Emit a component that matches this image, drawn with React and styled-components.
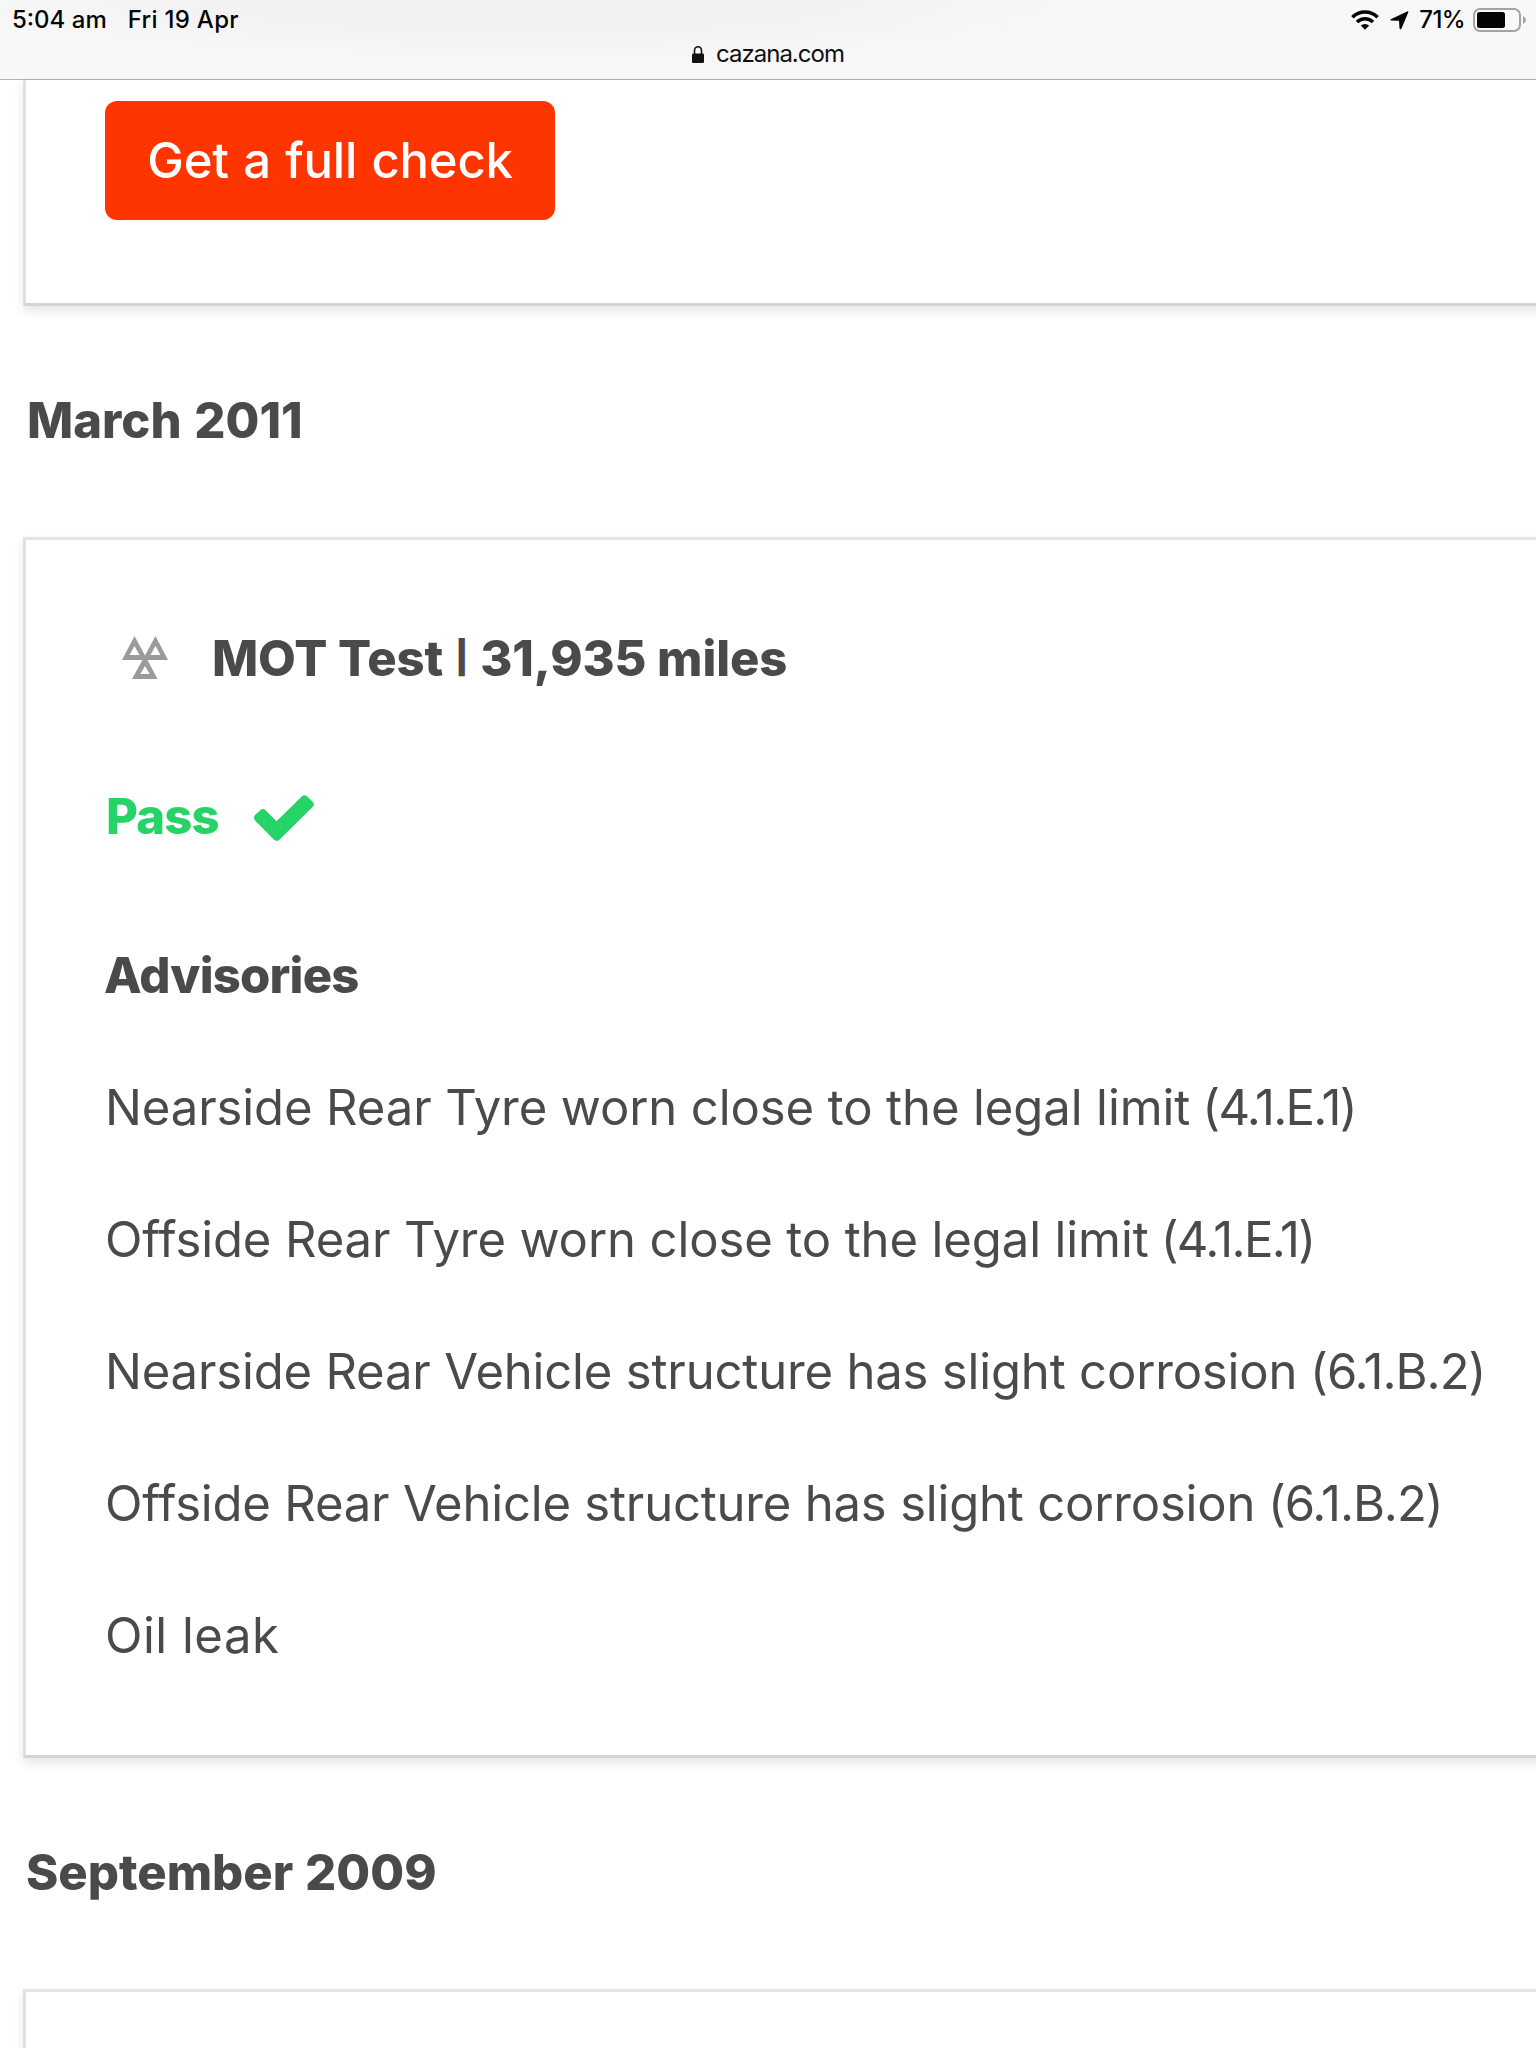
import React from "react";
import styled, { createGlobalStyle } from "styled-components";

const GlobalStyle = createGlobalStyle`
  * { box-sizing: border-box; }
  html, body { margin: 0; padding: 0; background: #fff; }
`;

const Screen = styled.div`
  width: 1536px;
  height: 2048px;
  overflow: hidden;
  display: flex;
  flex-direction: column;
  background: #fff;
  color: #4a4a4a;
  font-family: Inter, "Open Sans", sans-serif;
`;

const BrowserBar = styled.header`
  flex: none;
  height: 80px;
  border-bottom: 1px solid #b2b2b2;
  background: radial-gradient(ellipse 600px 60px at 530px 0, #f2f2f2 50%, #f8f8f8 100%);
  color: #050505;
  font-size: 24px;
`;

const StatusRow = styled.div`
  display: flex;
  align-items: center;
  height: 40px;
  padding: 0 10px 0 12px;
`;

const StatusText = styled.span`
  line-height: 40px;
  font-weight: 450;
  white-space: nowrap;
  letter-spacing: ${(p) => p.$spacing || 0}px;
  margin-right: ${(p) => p.$gap || 0}px;
`;

const StatusIcons = styled.div`
  display: flex;
  align-items: center;
  margin-left: auto;
`;

const Icon = styled.svg`
  display: block;
  flex: none;
  margin-right: ${(p) => p.$gap || 0}px;
  margin-top: ${(p) => p.$drop || 0}px;
`;

const AddressRow = styled.div`
  display: flex;
  justify-content: center;
  align-items: center;
  height: 28px;
`;

const Address = styled.span`
  line-height: 28px;
  color: #111;
  letter-spacing: -1px;
`;

const Timeline = styled.main`
  flex: 1;
  min-height: 0;
  display: flex;
  flex-direction: column;
  padding-left: 23px;
`;

const Card = styled.section`
  flex: none;
  width: 1560px;
  height: ${(p) => p.$height}px;
  padding: ${(p) => p.$padTop}px 0 0 79px;
  border: 3px solid #e5e5e5;
  border-top-width: ${(p) => (p.$openTop ? 0 : 3)}px;
  border-left-color: #e0e0e0;
  border-bottom-color: #d4d4d4;
  box-shadow: 0 5px 10px rgba(0, 0, 0, 0.1);
`;

const CheckButton = styled.button`
  display: block;
  width: 450px;
  height: 119px;
  padding: 0 0 1px;
  border: 0;
  border-radius: 12px;
  background: #ff3500;
  color: #fff;
  font: 500 49px Inter, sans-serif;
  letter-spacing: -0.2px;
  word-spacing: 1.5px;
  white-space: nowrap;
`;

const MonthHeading = styled.h2`
  flex: none;
  height: 231px;
  margin: 0;
  padding-left: ${(p) => p.$indent}px;
  font-size: 49px;
  font-weight: 800;
  line-height: 229px;
  letter-spacing: ${(p) => p.$spacing}px;
  word-spacing: ${(p) => p.$wordSpacing}px;
  white-space: nowrap;
`;

const EventTitle = styled.div`
  display: flex;
  align-items: center;
  height: 158px;
  padding-left: 17px;
`;

const Strong = styled.h3`
  margin: 0;
  color: ${(p) => p.$color || "inherit"};
  font-size: 49px;
  font-weight: 800;
  line-height: 158px;
  padding-top: 3px;
  letter-spacing: ${(p) => p.$spacing || 0}px;
  white-space: nowrap;
`;

const Divider = styled.span`
  display: inline-block;
  width: 37px;
  font-size: 32px;
  font-weight: 900;
  line-height: 1;
  letter-spacing: 0;
  text-align: center;
  vertical-align: 7px;
`;

const Result = styled.div`
  display: flex;
  align-items: center;
  gap: 35px;
  height: 158px;
  padding-left: 1px;
`;

const Advisories = styled.div`
  height: 145px;
  margin-left: -1px;
`;

const AdvisoryList = styled.ul`
  list-style: none;
  margin: 0;
  padding: 3px 0 0;
`;

const Advisory = styled.li`
  height: 132px;
  font-size: 49px;
  line-height: 132px;
  font-weight: 400;
  letter-spacing: ${(p) => p.$spacing}px;
  white-space: nowrap;
`;

const Code = styled.span`
  letter-spacing: ${(p) => p.$spacing}px;
`;

const advisories = [
  { text: "Nearside Rear Tyre worn close to the legal limit", code: "(4.1.E.1)", spacing: -0.1, codeSpacing: -1.7 },
  { text: "Offside Rear Tyre worn close to the legal limit", code: "(4.1.E.1)", spacing: -0.11, codeSpacing: -1.7 },
  { text: "Nearside Rear Vehicle structure has slight corrosion", code: "(6.1.B.2)", spacing: -0.17, codeSpacing: -1 },
  { text: "Offside Rear Vehicle structure has slight corrosion", code: "(6.1.B.2)", spacing: -0.19, codeSpacing: -1.1 },
  { text: "Oil leak", spacing: 0.5 },
];

const WifiIcon = () => (
  <Icon width="28" height="20" viewBox="0 0 28 20" $gap={11}>
    <g fill="none" stroke="#050505" strokeWidth="3.6">
      <path d="M1.4 7.2A18 18 0 0 1 26.6 7.2" />
      <path d="M6 12A11.4 11.4 0 0 1 22 12" />
    </g>
    <path d="M9.8 15.6A6 6 0 0 1 18.2 15.6L14 19.8Z" fill="#050505" />
  </Icon>
);

const LocationIcon = () => (
  <Icon width="19" height="19" viewBox="0 0 19 19" $gap={10}>
    <path d="M17.2 .4Q18.8 -.1 18.2 1.5L11.500 17.4Q10.200 19.400 9.500 17.2L9 9.8L1.4 9.4Q-.6 8.8 1.2 7.9Z" fill="#050505" />
  </Icon>
);

const BatteryIcon = () => (
  <Icon width="53" height="24" viewBox="0 0 53 24">
    <rect x="1" y="1" width="46" height="22" rx="6" fill="none" stroke="#a3a3a3" strokeWidth="2" />
    <rect x="4" y="4" width="28" height="16" rx="2.5" fill="#050505" />
    <path d="M50 8Q53 9.500 53 12T50 16Z" fill="#a3a3a3" />
  </Icon>
);

const LockIcon = () => (
  <Icon width="12" height="17" viewBox="0 0 12 17" $gap={12}>
    <path d="M2.500 8V4.500a3.500 3.700 0 0 1 7 0V8" fill="none" stroke="#111" strokeWidth="1.600" />
    <rect y="7.500" width="12" height="9.500" rx="1.300" fill="#111" />
  </Icon>
);

const MotIcon = () => (
  <Icon width="46" height="43" viewBox="0 0 46 43" $gap={44}>
    <path
      d="M12.500 0L23 19.500L33.500 0L46 24H25.500L35.500 43H10L20.500 24H0ZM12.500 10L7.500 19H17.500ZM33.500 10L28.500 19H38.500ZM23 30L18.300 38H27.700Z"
      fill="#9b9b9b"
      fillRule="evenodd"
    />
  </Icon>
);

const TickIcon = () => (
  <Icon width="60" height="46" viewBox="0 0 60 46" $drop={6}>
    <path
      d="M1 20L6.500 15Q9 13 11.500 15.200L22.500 26.200L48 1.200Q50.500-.8 53 1.200L58.600 6.800Q61 9.300 58.800 11.800L25.400 44.800Q22.700 47 20 44.800L1 25.500Q-1 22.800 1 20Z"
      fill="#26d367"
    />
  </Icon>
);

export default function App() {
  return (
    <Screen>
      <GlobalStyle />
      <BrowserBar>
        <StatusRow>
          <StatusText $gap={21}>5:04 am</StatusText>
          <StatusText $spacing={0.3}>Fri 19 Apr</StatusText>
          <StatusIcons>
            <WifiIcon />
            <LocationIcon />
            <StatusText $gap={8} $spacing={-0.6}>71%</StatusText>
            <BatteryIcon />
          </StatusIcons>
        </StatusRow>
        <AddressRow>
          <LockIcon />
          <Address>cazana.com</Address>
        </AddressRow>
      </BrowserBar>
      <Timeline>
        <Card $openTop $height={226} $padTop={21}>
          <CheckButton>Get a full check</CheckButton>
        </Card>
        <MonthHeading $indent={4} $spacing={0} $wordSpacing={2}>March 2011</MonthHeading>
        <Card $height={1221} $padTop={38}>
          <EventTitle>
            <MotIcon />
            <Strong $spacing={-0.1}>MOT Test<Divider>|</Divider>31,935 miles</Strong>
          </EventTitle>
          <Result>
            <Strong $color="#26d367" $spacing={-0.8}>Pass</Strong>
            <TickIcon />
          </Result>
          <Advisories>
            <Strong $spacing={-0.8}>Advisories</Strong>
          </Advisories>
          <AdvisoryList>
            {advisories.map(({ text, code, spacing, codeSpacing }) => (
              <Advisory key={text} $spacing={spacing}>
                {text}
                {code && <Code $spacing={codeSpacing}> {code}</Code>}
              </Advisory>
            ))}
          </AdvisoryList>
        </Card>
        <MonthHeading $indent={3} $spacing={0} $wordSpacing={1}>September 2009</MonthHeading>
        <Card $height={200} $padTop={38} />
      </Timeline>
    </Screen>
  );
}
